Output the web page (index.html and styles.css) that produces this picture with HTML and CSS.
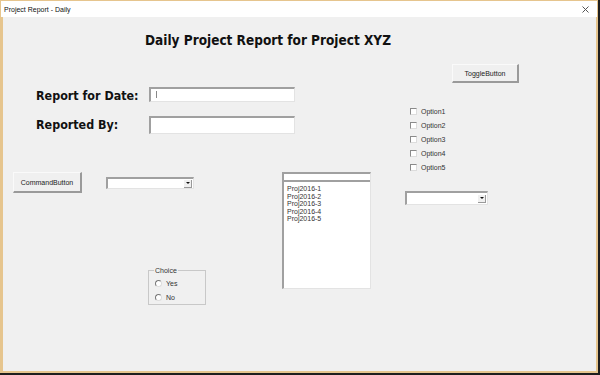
FILE: index.html
```html
<!DOCTYPE html>
<html>
    <head>
        <title>Project Report - Daily</title>
        <link rel="stylesheet" href="styles.css">
    </head>
    <body>
        <div class="window">
            <div class="titlebar">
                <span class="titletext">Project Report - Daily</span>
                <svg class="closebtn" width="7" height="7" viewBox="0 0 7 7">
                    <path d="M0.5 0.5 L6.5 6.5 M6.5 0.5 L0.5 6.5" stroke="#555" stroke-width="1" fill="none"/>
                </svg>
            </div>

            <div class="form">
                <p class="heading">Daily Project Report for Project XYZ</p>

                <p class="label label-date">Report for Date:</p>
                <div class="textbox textbox-date"><span class="caret"></span></div>

                <p class="label label-by">Reported By:</p>
                <div class="textbox textbox-by"></div>

                <button class="winbutton togglebutton">ToggleButton</button>

                <div class="checklist">
                    <label class="checkrow"><span class="checkbox"></span>Option1</label>
                    <label class="checkrow"><span class="checkbox"></span>Option2</label>
                    <label class="checkrow"><span class="checkbox"></span>Option3</label>
                    <label class="checkrow"><span class="checkbox"></span>Option4</label>
                    <label class="checkrow"><span class="checkbox"></span>Option5</label>
                </div>

                <button class="winbutton commandbutton">CommandButton</button>

                <div class="combo combo-left"><span class="dropbtn"><span class="arrow"></span></span></div>
                <div class="combo combo-right"><span class="dropbtn"><span class="arrow"></span></span></div>

                <div class="listbox">
                    <div class="listtop"></div>
                    <div class="listitems">
                        <div class="listitem">Proj2016-1</div>
                        <div class="listitem">Proj2016-2</div>
                        <div class="listitem">Proj2016-3</div>
                        <div class="listitem">Proj2016-4</div>
                        <div class="listitem">Proj2016-5</div>
                    </div>
                </div>

                <fieldset class="choice">
                    <legend class="choicelegend">Choice</legend>
                    <label class="radiorow"><span class="radio"></span>Yes</label>
                    <label class="radiorow"><span class="radio"></span>No</label>
                </fieldset>
            </div>
        </div>
    </body>
</html>
```

FILE: styles.css
```css
body{
    margin:0;
    background-color:#1e1e1e;
    font-family:"Liberation Sans", Arial, sans-serif;
}

.window{
    width:596px;
    height:371px;
    border:1px solid #e6c58e;
    background-color:#f0f0f0;
    display:flex;
    flex-direction:column;
}

.titlebar{
    height:16px;
    background-color:white;
    display:flex;
    align-items:center;
    justify-content:space-between;
    padding:0 8px 0 3px;
    font-size:7px;
    color:#111;
}

.form{
    position:relative;
    flex:1;
    border-left:2px solid #e6c58e;
    border-right:1px solid #e6c58e;
    border-bottom:1px solid #e6c58e;
}

/* controls sit on the form canvas at their designer positions */
.form > *{
    position:absolute;
    margin:0;
}

.heading{
    left:142px;
    top:15px;
    font-size:13.5px;
    font-weight:bold;
    color:#111;
    font-family:"DejaVu Sans Condensed", "DejaVu Sans", Verdana, sans-serif;
    font-stretch:condensed;
}

.label{
    font-family:"DejaVu Sans Condensed", "DejaVu Sans", Verdana, sans-serif;
    font-stretch:condensed;
    font-size:12.4px;
    font-weight:bold;
    color:#111;
}

.label-date{ left:33px; top:71px; }
.label-by{ left:33px; top:100px; }

.textbox{
    width:143px;
    background-color:white;
    border-top:2px solid #a0a0a0;
    border-left:2px solid #a0a0a0;
    border-right:1px solid #e3e3e3;
    border-bottom:1px solid #e3e3e3;
}

.textbox-date{ left:146px; top:70px; height:12px; }
.textbox-by{ left:146px; top:99px; height:15px; }

.caret{
    display:block;
    margin:2px 0 0 5px;
    width:1px;
    height:7px;
    background-color:#888;
}

.winbutton{
    font-family:"Liberation Sans", Arial, sans-serif;
    font-size:7px;
    color:#222;
    background-color:#f0f0f0;
    border-top:1px solid #fafafa;
    border-left:1px solid #fafafa;
    border-right:2px solid #9a9a9a;
    border-bottom:2px solid #9a9a9a;
    padding:0;
}

.togglebutton{ left:449px; top:47px; width:67px; height:19px; }
.commandbutton{ left:10px; top:155px; width:69px; height:21px; }

.checklist{
    left:407px;
    top:90px;
    display:flex;
    flex-direction:column;
    gap:5px;
}

.checkrow{
    display:flex;
    align-items:center;
    font-size:7px;
    color:#333;
    height:9px;
}

.checkbox{
    width:5px;
    height:5px;
    margin-right:4px;
    background-color:white;
    border-top:1px solid #8a8a8a;
    border-left:1px solid #8a8a8a;
    border-right:1px solid #dcdcdc;
    border-bottom:1px solid #dcdcdc;
}

.combo{
    background-color:white;
    border-top:2px solid #a0a0a0;
    border-left:2px solid #a0a0a0;
    border-right:1px solid #e3e3e3;
    border-bottom:1px solid #e3e3e3;
    display:flex;
    justify-content:flex-end;
    align-items:center;
}

.combo-left{ left:103px; top:160px; width:85px; height:9px; }
.combo-right{ left:402px; top:174px; width:80px; height:11px; }

.dropbtn{
    width:7px;
    height:7px;
    margin-right:1px;
    background-color:#f0f0f0;
    border-right:1px solid #999;
    border-bottom:1px solid #999;
    display:flex;
    align-items:center;
    justify-content:center;
}

.arrow{
    width:0;
    height:0;
    border-left:2px solid transparent;
    border-right:2px solid transparent;
    border-top:2px solid #111;
}

.listbox{
    left:279px;
    top:155px;
    width:86px;
    height:114px;
    background-color:white;
    border-left:2px solid #a0a0a0;
    border-top:2px solid #a0a0a0;
    border-right:1px solid #e3e3e3;
    border-bottom:1px solid #e3e3e3;
}

.listtop{
    height:6px;
    border-bottom:2px solid #a0a0a0;
}

.listitems{
    padding:3px 0 0 3px;
}

.listitem{
    font-size:7px;
    color:#333;
    height:7.6px;
    line-height:7.6px;
}

.choice{
    left:145px;
    top:250px;
    width:50px;
    height:31px;
    padding:5px 0 0 6px;
    border:1px solid #c8c8c8;
    display:flex;
    flex-direction:column;
    gap:6px;
}

.choicelegend{
    font-size:7px;
    color:#333;
    padding:0 1px;
    margin-left:-1px;
}

.radiorow{
    display:flex;
    align-items:center;
    font-size:7px;
    color:#333;
    height:8px;
}

.radio{
    width:5px;
    height:5px;
    margin-right:4px;
    border-radius:50%;
    background-color:white;
    border-top:1px solid #777;
    border-left:1px solid #777;
    border-right:1px solid #ddd;
    border-bottom:1px solid #ddd;
}
```
